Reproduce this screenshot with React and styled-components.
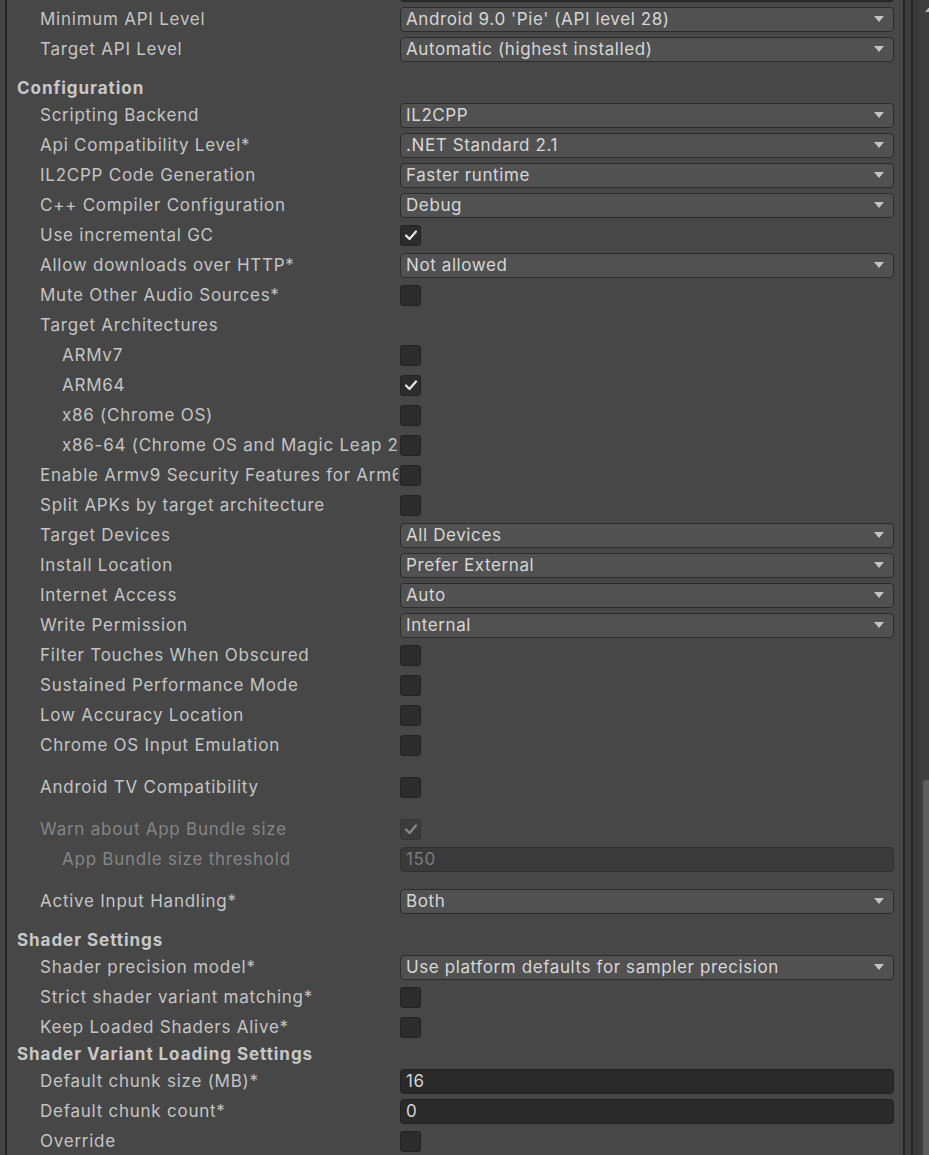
import styled, { createGlobalStyle } from 'styled-components';

const GlobalStyle = createGlobalStyle`
  html, body {
    margin: 0;
    padding: 0;
    background: #474747;
    overflow: hidden;
  }
  body {
    font-family: Inter, 'Noto Sans', 'Liberation Sans', sans-serif;
  }
`;

const Window = styled.div`
  display: flex;
  height: 1155px;
  width: 929px;
  overflow: hidden;
  background: #474747;
`;

const LeftEdge = styled.div`
  width: 5px;
  flex-shrink: 0;
  background: #454545;
  border-right: 2px solid #262626;
`;

const Panel = styled.div`
  flex: 1;
  min-width: 0;
  padding: 0 9px 0 10px;
  margin-top: -26px;
  background: #474747;
`;

const RightEdge = styled.div`
  display: flex;
  flex-shrink: 0;
  height: 100%;
`;

const Strip = styled.div`
  width: ${(p) => p.$w}px;
  background: ${(p) => p.$bg};
`;

const ScrollTrack = styled.div`
  position: relative;
  width: 10px;
  background: #3e3e3e;
`;

const ScrollThumb = styled.div`
  position: absolute;
  left: 4px;
  right: 0;
  top: 780px;
  bottom: 0;
  background: #5e5e5e;
  border-top-left-radius: 3px;
`;

const ScrollArrow = styled.div`
  position: absolute;
  top: 6px;
  left: 6px;
  width: 0;
  height: 0;
  border-left: 5px solid transparent;
  border-right: 5px solid transparent;
  border-bottom: 6px solid #b8b8b8;
`;

const Header = styled.div`
  height: 24px;
  display: flex;
  align-items: center;
  margin-top: ${(p) => (p.$space ? 12 : 0)}px;
  font-size: 17px;
  font-weight: 700;
  color: #c8c8c8;
  letter-spacing: 0.95px;
`;

const Row = styled.div`
  display: grid;
  grid-template-columns: minmax(0, 1fr) 494px;
  column-gap: 2px;
  align-items: center;
  height: 30px;
  margin-top: ${(p) => (p.$space ? 12 : 0)}px;
`;

const Label = styled.div`
  padding-left: ${(p) => p.$indent * 22 + 1}px;
  font-size: 17px;
  letter-spacing: 0.75px;
  color: ${(p) => (p.$disabled ? '#858585' : '#c4c4c4')};
  white-space: nowrap;
  overflow: hidden;
`;

const Dropdown = styled.div`
  display: flex;
  align-items: center;
  justify-content: space-between;
  height: 23px;
  padding: 0 9px 0 5px;
  background: #515151;
  border: 1px solid #2c2c2c;
  border-radius: 4px;
  font-size: 17px;
  letter-spacing: 0.6px;
  color: #d6d6d6;
  white-space: nowrap;
`;

const Arrow = styled.span`
  width: 0;
  height: 0;
  border-left: 5px solid transparent;
  border-right: 5px solid transparent;
  border-top: 6px solid #c4c4c4;
`;

const TextField = styled.div`
  display: flex;
  align-items: center;
  height: 23px;
  padding: 0 5px;
  background: ${(p) => (p.$disabled ? '#3a3a3a' : '#2a2a2a')};
  border: 1px solid ${(p) => (p.$disabled ? '#303030' : '#212121')};
  border-radius: 4px;
  font-size: 17px;
  letter-spacing: 0.6px;
  color: ${(p) => (p.$disabled ? '#7c7c7c' : '#d6d6d6')};
`;

const Check = styled.div`
  display: flex;
  align-items: center;
  justify-content: center;
  width: 19px;
  height: 19px;
  background: ${(p) => (p.$disabled ? '#3c3c3c' : '#2c2c2c')};
  border: 1px solid ${(p) => (p.$disabled ? '#353535' : '#232323')};
  border-radius: 3px;
`;

function CheckBox({ checked, disabled }) {
  return (
    <Check $disabled={disabled}>
      {checked && (
        <svg width='14' height='12' viewBox='0 0 14 12'>
          <polyline
            points='2,6.5 5.5,10 12,2.5'
            fill='none'
            stroke={disabled ? '#8a8a8a' : '#e8e8e8'}
            strokeWidth='2.2'
            strokeLinecap='round'
            strokeLinejoin='round'
          />
        </svg>
      )}
    </Check>
  );
}

const items = [
  { label: 'Bundle Version Code', kind: 'text', value: '1' },
  { label: 'Minimum API Level', kind: 'drop', value: "Android 9.0 'Pie' (API level 28)" },
  { label: 'Target API Level', kind: 'drop', value: 'Automatic (highest installed)' },
  { header: 'Configuration', space: true },
  { label: 'Scripting Backend', kind: 'drop', value: 'IL2CPP' },
  { label: 'Api Compatibility Level*', kind: 'drop', value: '.NET Standard 2.1' },
  { label: 'IL2CPP Code Generation', kind: 'drop', value: 'Faster runtime' },
  { label: 'C++ Compiler Configuration', kind: 'drop', value: 'Debug' },
  { label: 'Use incremental GC', kind: 'check', value: true },
  { label: 'Allow downloads over HTTP*', kind: 'drop', value: 'Not allowed' },
  { label: 'Mute Other Audio Sources*', kind: 'check', value: false },
  { label: 'Target Architectures' },
  { label: 'ARMv7', kind: 'check', value: false, indent: 2 },
  { label: 'ARM64', kind: 'check', value: true, indent: 2 },
  { label: 'x86 (Chrome OS)', kind: 'check', value: false, indent: 2 },
  { label: 'x86-64 (Chrome OS and Magic Leap 2)', kind: 'check', value: false, indent: 2 },
  { label: 'Enable Armv9 Security Features for Arm64', kind: 'check', value: false },
  { label: 'Split APKs by target architecture', kind: 'check', value: false },
  { label: 'Target Devices', kind: 'drop', value: 'All Devices' },
  { label: 'Install Location', kind: 'drop', value: 'Prefer External' },
  { label: 'Internet Access', kind: 'drop', value: 'Auto' },
  { label: 'Write Permission', kind: 'drop', value: 'Internal' },
  { label: 'Filter Touches When Obscured', kind: 'check', value: false },
  { label: 'Sustained Performance Mode', kind: 'check', value: false },
  { label: 'Low Accuracy Location', kind: 'check', value: false },
  { label: 'Chrome OS Input Emulation', kind: 'check', value: false },
  { label: 'Android TV Compatibility', kind: 'check', value: false, space: true },
  { label: 'Warn about App Bundle size', kind: 'check', value: true, disabled: true, space: true },
  { label: 'App Bundle size threshold', kind: 'text', value: '150', disabled: true, indent: 2 },
  { label: 'Active Input Handling*', kind: 'drop', value: 'Both', space: true },
  { header: 'Shader Settings', space: true },
  { label: 'Shader precision model*', kind: 'drop', value: 'Use platform defaults for sampler precision' },
  { label: 'Strict shader variant matching*', kind: 'check', value: false },
  { label: 'Keep Loaded Shaders Alive*', kind: 'check', value: false },
  { header: 'Shader Variant Loading Settings' },
  { label: 'Default chunk size (MB)*', kind: 'text', value: '16' },
  { label: 'Default chunk count*', kind: 'text', value: '0' },
  { label: 'Override', kind: 'check', value: false },
];

function Field({ item }) {
  if (item.kind === 'drop') {
    return (
      <Dropdown>
        {item.value}
        <Arrow />
      </Dropdown>
    );
  }
  if (item.kind === 'text') {
    return <TextField $disabled={item.disabled}>{item.value}</TextField>;
  }
  if (item.kind === 'check') {
    return <CheckBox checked={item.value} disabled={item.disabled} />;
  }
  return <div />;
}

export default function App() {
  return (
    <>
      <GlobalStyle />
      <Window>
        <LeftEdge />
        <Panel>
          {items.map((item, i) =>
            item.header ? (
              <Header key={i} $space={item.space}>
                {item.header}
              </Header>
            ) : (
              <Row key={i} $space={item.space}>
                <Label $indent={item.indent || 1} $disabled={item.disabled}>
                  {item.label}
                </Label>
                <Field item={item} />
              </Row>
            )
          )}
        </Panel>
        <RightEdge>
          <Strip $w={2} $bg='#242424' />
          <Strip $w={6} $bg='#3c3c3c' />
          <Strip $w={2} $bg='#262626' />
          <Strip $w={6} $bg='#393939' />
          <ScrollTrack>
            <ScrollArrow />
            <ScrollThumb />
          </ScrollTrack>
        </RightEdge>
      </Window>
    </>
  );
}
